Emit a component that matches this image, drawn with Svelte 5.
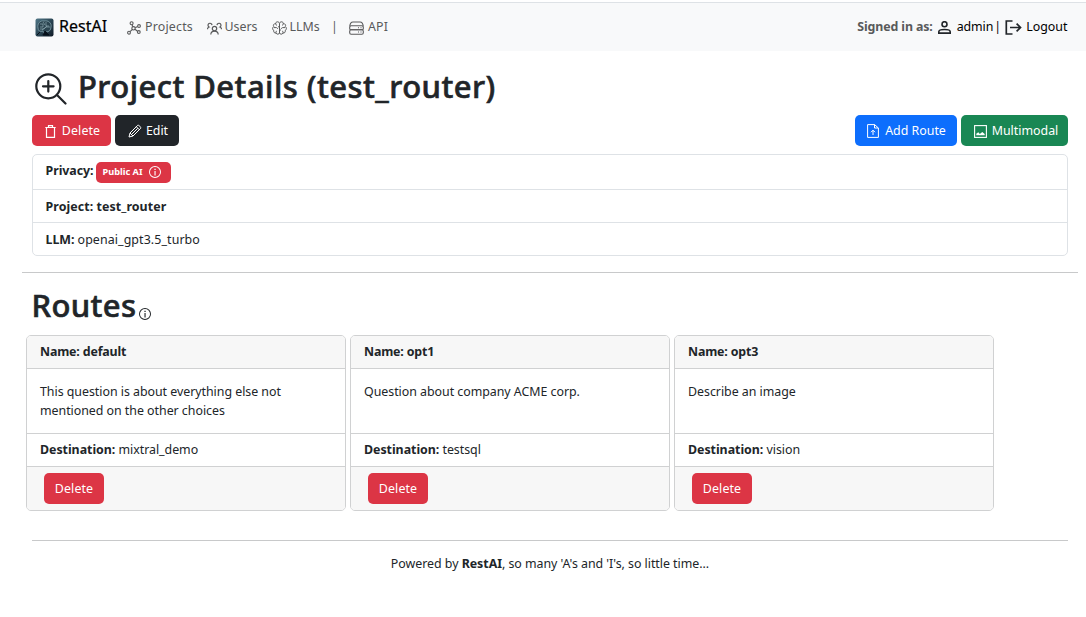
<script>
  const routes = [
    { name: 'default', text: 'This question is about everything else not mentioned on the other choices', destination: 'mixtral_demo' },
    { name: 'opt1', text: 'Question about company ACME corp.', destination: 'testsql' },
    { name: 'opt3', text: 'Describe an image', destination: 'vision' }
  ];
</script>

{#snippet info(size)}
  <svg class="info" width={size} height={size} viewBox="0 0 16 16" fill="currentColor">
    <path d="M8 14.7A6.7 6.7 0 1 1 8 1.3a6.7 6.7 0 0 1 0 13.4M8 16A8 8 0 1 0 8 0a8 8 0 0 0 0 16" />
    <path d="M7.3 6.5h1.5v6H7.3zM7.2 3.7h1.7v1.6H7.2z" />
  </svg>
{/snippet}

<nav>
  <a class="brand" href="#home">
    <svg width="19" height="19" viewBox="0 0 19 19">
      <defs>
        <linearGradient id="logo" x1="0" y1="0" x2="1" y2="1">
          <stop offset="0" stop-color="#527888" /><stop offset=".5" stop-color="#2b4654" /><stop offset="1" stop-color="#101a26" />
        </linearGradient>
      </defs>
      <rect x=".5" y=".5" width="18" height="18" rx="2" fill="url(#logo)" />
      <path d="M3 10C2 6 5 2 9 3c4-1 8 2 7 6 0 3-2 5-5 5l-2 3-1-4C5 14 3 13 3 10Z" fill="#2b4450" stroke="#7897a3" stroke-width=".9" />
      <path d="M5 6h3v3H5m6-5v4h3m-9 3h4l2-2h4M8 4l2 3m-3 5 5-4" fill="none" stroke="#8eaab3" stroke-width=".7" />
      <path d="m10 13 4 4H8zM2 17l3-3" fill="#07111b" stroke="#07111b" />
    </svg>
    <span>RestAI</span>
  </a>
  <a class="link projects" href="#projects">
    <svg width="14" height="14" viewBox="0 0 14 14" fill="none" stroke="currentColor" stroke-width="1.1">
      <circle cx="4.6" cy="2.2" r="1.5" /><circle cx="6.5" cy="7.3" r="1.7" /><circle cx="2" cy="11.7" r="1.4" /><circle cx="12" cy="5" r="1.4" /><circle cx="11.8" cy="11" r="1.4" />
      <path d="m5.1 3.7.7 2M8.2 6.8l2.4-1.2M8 8.3l2.5 1.9M5.2 8.6 3 10.7" />
    </svg>
    <span>Projects</span>
  </a>
  <a class="link users" href="#users">
    <svg width="15" height="13" viewBox="0 0 15 13" fill="none" stroke="currentColor" stroke-width="1.2">
      <circle cx="7.5" cy="6.6" r="2.2" /><path d="M3.8 12.5c.2-4.4 7.2-4.4 7.4 0M5 3.1A2 2 0 1 0 2 5C1 5.3.6 6 .5 7.2M10 3.1A2 2 0 1 1 13 5c1 .3 1.4 1 1.5 2.2" />
    </svg>
    <span>Users</span>
  </a>
  <a class="link llms" href="#llms">
    <svg width="15" height="14" viewBox="0 0 15 14" fill="none" stroke="currentColor" stroke-width="1">
      <path d="M7.5 2.2C6.5.1 3.7.5 3.7 2.6 1.6 2.5.9 4.5 1.7 5.6.1 6.6.3 8.8 1.8 9.5c-.4 2 1 2.8 2.2 2.5.8 1.7 3 1.5 3.5 0V2.2C8.5.1 11.3.5 11.3 2.6c2.1-.1 2.8 1.9 2 3 1.6 1 1.4 3.2-.1 3.9.4 2-1 2.8-2.2 2.5-.8 1.7-3 1.5-3.5 0" />
      <path d="M3.7 2.6c0 1 .5 1.6 1.3 1.6M1.8 6.6h2.4c1 0 1.4.5 1.4 1.4M7.5 5.8H6M4 12c-.3-1 .2-1.9 1-1.9M11.3 2.6c0 1-.5 1.6-1.3 1.6m3.2 2.4h-2.4c-1 0-1.4.5-1.4 1.4m-1.9 1H9m2 3c.3-1-.2-1.9-1-1.9" />
    </svg>
    <span>LLMs</span>
  </a>
  <span class="divider">|</span>
  <a class="link api" href="#api">
    <svg width="15" height="14" viewBox="0 0 15 14" fill="none" stroke="currentColor" stroke-width="1.1">
      <path d="M.8 5.4C1 2.7 2 1 4 1h7c2 0 3 1.7 3.2 4.4" /><rect x=".7" y="4.8" width="13.6" height="4" rx="1.4" /><rect x=".7" y="8.8" width="13.6" height="4.4" rx="1.4" /><path d="M9 6.8h1m1.5 0h1M9 11h1m1.5 0h1" />
    </svg>
    <span>API</span>
  </a>
  <div class="account">
    <b>Signed in as:</b>
    <svg class="person" width="13" height="13" viewBox="0 0 13 13" fill="none" stroke="currentColor" stroke-width="1.6">
      <circle cx="6.5" cy="3.2" r="2.5" /><path d="M.8 12.1v-1.3c0-3 11.4-3 11.4 0v1.3z" />
    </svg>
    <a class="admin" href="#admin">admin</a><span class="bar">|</span>
    <svg class="exit" width="17" height="15" viewBox="0 0 17 15" fill="none" stroke="currentColor" stroke-width="1.7">
      <path d="M7.5 1H1.3v13h6.2M5 7.5h10.3m-3.7-3.8 3.9 3.8-3.9 3.8" />
    </svg>
    <a class="logout" href="#logout">Logout</a>
  </div>
</nav>

<main>
  <h1>
    <svg width="32" height="32" viewBox="0 0 32 32" fill="none" stroke="currentColor" stroke-width="2.2" stroke-linecap="round">
      <circle cx="13.3" cy="13.3" r="12" /><path d="m22 22 8.5 8.5M13.3 8v10.6M8 13.3h10.6" />
    </svg>
    <span>Project Details (test_router)</span>
  </h1>

  <div class="actions">
    <button class="red remove">
      <svg width="11" height="13" viewBox="0 0 11 13" fill="none" stroke="currentColor" stroke-width="1.2"><path d="M.3 2.5h10.4M3.5 2.2V.7h4v1.5M1.5 2.7v9.6h8V2.7" /></svg>
      <span>Delete</span>
    </button>
    <button class="dark">
      <svg width="14" height="14" viewBox="0 0 14 14" fill="none" stroke="currentColor" stroke-width="1"><path d="m1 13 1-4L9.7 1.3c.8-.8 3.8 2.2 3 3L5 12zM8.3 2.7l3 3M2 9l3 3m-1.3-1.7 6-6" /></svg>
      <span>Edit</span>
    </button>
    <button class="blue">
      <svg width="12" height="14" viewBox="0 0 12 14" fill="none" stroke="currentColor" stroke-width="1"><path d="M.6.6h7L11.4 4v9.4H.6zM7.5.6V4h3.9M6 11V6.3M4 8.2l2-2 2 2" /></svg>
      <span>Add Route</span>
    </button>
    <button class="green">
      <svg width="13" height="13" viewBox="0 0 13 13"><rect x=".6" y=".6" width="11.8" height="11.8" fill="none" stroke="currentColor" stroke-width="1.1" /><path d="M2.3 10.2V8.8l2-1.6L5.8 9l2.5-2 2.4 2v1.2z" fill="currentColor" /></svg>
      <span>Multimodal</span>
    </button>
  </div>

  <ul>
    <li class="privacy"><b>Privacy:</b><span class="badge"><span>Public AI</span>{@render info(12)}</span></li>
    <li><b class="project">Project: test_router</b></li>
    <li><b class="llm">LLM:</b><span class="model">openai_gpt3.5_turbo</span></li>
  </ul>
</main>

<hr class="wide" />

<h2><span>Routes</span>{@render info(12)}</h2>

<section>
  {#each routes as route}
    <article>
      <header>Name: {route.name}</header>
      <p>{route.text}</p>
      <div class="destination"><b>Destination:</b> <span>{route.destination}</span></div>
      <footer><button class="red">Delete</button></footer>
    </article>
  {/each}
</section>

<hr class="end" />
<div class="powered">Powered by <b>RestAI</b>, so many 'A's and 'I's, so little time...</div>

<style>
  :global(body) {
    margin: 0;
    background: #fff;
    color: #212529;
    font: 12.4px/19px "Noto Sans", "Open Sans", sans-serif;
  }
  :global(#app) { overflow: hidden; }
  svg { display: block; flex: none; }
  a { color: #000; text-decoration: none; }
  nav {
    box-sizing: border-box;
    display: flex;
    align-items: center;
    height: 49px;
    margin: 2px 0 18px;
    padding: 0 18.5px 1px 35px;
    border-top: 1px solid #dee2e6;
    background: #f8f9fa;
  }
  .brand { display: flex; align-items: center; gap: 5px; width: 92px; font-size: 16px; -webkit-text-stroke: .2px; }
  .brand svg { margin-top: 1px; }
  .link, .divider { color: #595a5b; }
  .link { display: flex; align-items: center; gap: 4px; }
  .link svg { margin-top: 3px; }
  .projects { width: 79.5px; letter-spacing: .2px; }
  .users { width: 65px; gap: 3px; }
  .llms { width: 59.5px; gap: 3px; }
  .divider { width: 18px; }
  .api { letter-spacing: .2px; }
  .account { display: flex; align-items: center; margin-left: auto; white-space: nowrap; }
  .account b { color: #595a5b; letter-spacing: -.12px; }
  .person { margin: 2px 6px 0 5px; }
  .admin { letter-spacing: -.1px; }
  .bar { width: 3px; margin-left: 3px; color: #000; display: flex; justify-content: center; }
  .exit { margin: 2px 4px 0 6px; }
  main { padding: 0 18px 0 32px; }
  h1 { display: flex; align-items: center; gap: 11px; height: 36px; margin: 0 0 10px 3px; font-size: 31px; line-height: 36px; font-weight: 500; letter-spacing: .45px; -webkit-text-stroke: .6px; white-space: nowrap; }
  h1 span, h2 span { margin-top: -2px; }
  h1 svg { margin-top: 4px; }
  .actions { display: flex; gap: 4px; height: 31px; }
  button {
    box-sizing: border-box;
    display: flex;
    align-items: center;
    justify-content: center;
    height: 31px;
    padding: 0;
    border: 0;
    border-radius: 5px;
    color: #fff;
    font: inherit;
    white-space: nowrap;
  }
  .red { background: #dc3545; }
  .remove { width: 79px; gap: 6px; padding-left: 2px; letter-spacing: .12px; }
  .dark { width: 64px; gap: 4px; padding-left: 2px; background: #212529; }
  .blue { width: 102px; gap: 6px; padding-left: 1px; margin-left: auto; background: #0d6efd; }
  .green { width: 107px; gap: 5px; padding-left: 3px; background: #198754; }
  .actions svg { margin-top: 2px; }
  .dark svg, .blue svg { margin-top: 1px; }
  ul { margin: 8px 0 0; padding: 0; border: 1px solid #dee2e6; border-radius: 5px; list-style: none; }
  li { display: flex; align-items: center; box-sizing: border-box; height: 33px; padding-left: 12.5px; border-bottom: 1px solid #dee2e6; }
  li:last-child { height: 32px; border: 0; }
  .privacy { height: 35px; }
  .privacy b { margin-top: -3px; letter-spacing: -.05px; }
  .project { letter-spacing: .08px; }
  .badge { display: flex; align-items: center; justify-content: center; box-sizing: border-box; gap: 6px; width: 75px; height: 21px; margin: 1px 0 0 2px; padding: 0 3px 1px 0; border-radius: 5px; background: #dc3545; color: #fff; font-size: 9.2px; font-weight: 700; }
  .badge span { margin-top: -1px; }
  .model { margin-left: 3px; letter-spacing: .1px; }
  hr { height: 1px; border: 0; background: #c8c9ca; }
  .wide { margin: 16px 8px 15px 22px; }
  h2 { display: flex; align-items: center; height: 36px; margin: 0 0 11px 31.5px; font-size: 31px; line-height: 36px; font-weight: 500; letter-spacing: .35px; }
  h2 span { -webkit-text-stroke: .6px; }
  h2 :global(svg) { margin: 16px 0 0 3px; }
  section { display: flex; gap: 4px; padding-left: 26px; }
  article { box-sizing: border-box; width: 320px; height: 176px; overflow: hidden; border: 1px solid #d0d1d2; border-radius: 5px; letter-spacing: -.03px; }
  header { box-sizing: border-box; height: 33px; padding: 6px 13px; border-bottom: 1px solid #d0d1d2; background: #f7f7f7; font-weight: 700; letter-spacing: -.16px; }
  p { box-sizing: border-box; height: 64px; margin: 0; padding: 13px; }
  .destination { box-sizing: border-box; height: 34px; padding: 6px 13px; border-block: 1px solid #d0d1d2; }
  footer { height: 43px; padding: 6px 17px 0; background: #f7f7f7; }
  footer button { width: 60px; letter-spacing: .12px; }
  .end { margin: 29px 18px 13px 32px; }
  .powered { text-align: center; padding-left: 14px; letter-spacing: -.03px; }
</style>
